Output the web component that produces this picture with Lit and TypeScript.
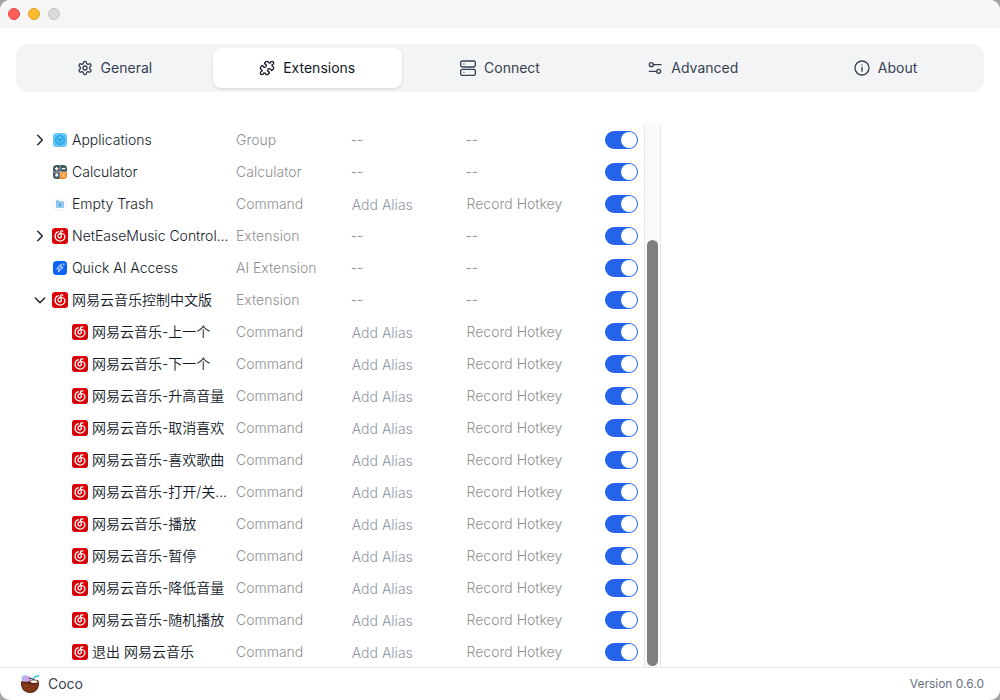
import { LitElement, html, svg, css } from "lit";
import { customElement, state } from "lit/decorators.js";

type IconName = "apps" | "calc" | "trash" | "netease" | "ai";

interface Entry {
  name: string;
  icon: IconName;
  type: string;
  expand?: "open" | "closed";
  editable?: boolean;
  child?: boolean;
}

const command = (name: string): Entry => ({
  name,
  icon: "netease",
  type: "Command",
  editable: true,
  child: true,
});

const ENTRIES: Entry[] = [
  { name: "Applications", icon: "apps", type: "Group", expand: "closed" },
  { name: "Calculator", icon: "calc", type: "Calculator" },
  { name: "Empty Trash", icon: "trash", type: "Command", editable: true },
  { name: "NetEaseMusic Control...", icon: "netease", type: "Extension", expand: "closed" },
  { name: "Quick AI Access", icon: "ai", type: "AI Extension" },
  { name: "网易云音乐控制中文版", icon: "netease", type: "Extension", expand: "open" },
  command("网易云音乐-上一个"),
  command("网易云音乐-下一个"),
  command("网易云音乐-升高音量"),
  command("网易云音乐-取消喜欢"),
  command("网易云音乐-喜欢歌曲"),
  command("网易云音乐-打开/关..."),
  command("网易云音乐-播放"),
  command("网易云音乐-暂停"),
  command("网易云音乐-降低音量"),
  command("网易云音乐-随机播放"),
  command("退出 网易云音乐"),
];

const TABS = [
  {
    label: "General",
    icon: svg`<path d="M12.22 2h-.44a2 2 0 0 0-2 2v.18a2 2 0 0 1-1 1.73l-.43.25a2 2 0 0 1-2 0l-.15-.08a2 2 0 0 0-2.73.73l-.22.38a2 2 0 0 0 .73 2.73l.15.1a2 2 0 0 1 1 1.72v.51a2 2 0 0 1-1 1.74l-.15.09a2 2 0 0 0-.73 2.73l.22.38a2 2 0 0 0 2.73.73l.15-.08a2 2 0 0 1 2 0l.43.25a2 2 0 0 1 1 1.73V20a2 2 0 0 0 2 2h.44a2 2 0 0 0 2-2v-.18a2 2 0 0 1 1-1.73l.43-.25a2 2 0 0 1 2 0l.15.08a2 2 0 0 0 2.73-.73l.22-.39a2 2 0 0 0-.73-2.73l-.15-.08a2 2 0 0 1-1-1.74v-.5a2 2 0 0 1 1-1.74l.15-.09a2 2 0 0 0 .73-2.73l-.22-.38a2 2 0 0 0-2.73-.73l-.15.08a2 2 0 0 1-2 0l-.43-.25a2 2 0 0 1-1-1.73V4a2 2 0 0 0-2-2z"/><circle cx="12" cy="12" r="3"/>`,
  },
  {
    label: "Extensions",
    icon: svg`<path d="M15.39 4.39a1 1 0 0 0 1.68-.474 2.5 2.5 0 1 1 3.014 3.015 1 1 0 0 0-.474 1.68l1.683 1.682a2.414 2.414 0 0 1 0 3.414L19.61 15.39a1 1 0 0 1-1.68-.474 2.5 2.5 0 1 0-3.014 3.015 1 1 0 0 1 .474 1.68l-1.683 1.682a2.414 2.414 0 0 1-3.414 0L8.61 19.61a1 1 0 0 0-1.68.474 2.5 2.5 0 1 1-3.014-3.015 1 1 0 0 0 .474-1.68l-1.683-1.682a2.414 2.414 0 0 1 0-3.414L4.39 8.61a1 1 0 0 1 1.68.474 2.5 2.5 0 1 0 3.014-3.015 1 1 0 0 1-.474-1.68l1.683-1.682a2.414 2.414 0 0 1 3.414 0z"/>`,
  },
  {
    label: "Connect",
    icon: svg`<rect x="1" y="1.500" width="22" height="9" rx="2.5"/><rect x="1" y="14" width="22" height="9" rx="2.5"/><path d="M6 6h.01M6 18.500h.01"/>`,
  },
  {
    label: "Advanced",
    icon: svg`<path d="M21 7H9.500M14.500 17H3.500"/><circle cx="17.500" cy="17" r="3"/><circle cx="6.500" cy="7" r="3"/>`,
  },
  {
    label: "About",
    icon: svg`<circle cx="12" cy="12" r="10.5"/><path d="M12 17v-6M12 7.5h.01"/>`,
  },
];

const ICONS = {
  apps: svg`<rect x="1" y="1" width="14" height="14" rx="3.5" fill="#63c6f8"/>
    <path d="M8 3.2 12.2 5.6v4.8L8 12.8 3.8 10.4V5.6z" fill="#54bdf4" stroke="#1e9ade" stroke-width="1" stroke-linejoin="round"/>
    <path d="M5 6.300 8 8l3-1.700M8 8v3.500" fill="none" stroke="#1e9ade" stroke-width="1"/>`,
  calc: svg`<path d="M4.500 1H7.800V7.800H1V4.500A3.500 3.500 0 0 1 4.500 1z" fill="#455a64"/>
    <path d="M8.200 1H11.500A3.500 3.500 0 0 1 15 4.500V7.800H8.200z" fill="#455a64"/>
    <path d="M1 8.200H7.800V15H4.500A3.500 3.500 0 0 1 1 11.500z" fill="#455a64"/>
    <path d="M8.200 8.200H15V11.500A3.500 3.500 0 0 1 11.500 15H8.200z" fill="#fb8c1a"/>
    <path d="M4.700 3v3.400M3 4.700h3.400M9.800 4.700h3.400" stroke="#fff" stroke-width="1.200"/>
    <rect x="3.400" y="9.600" width="2.800" height="3" rx=".5" fill="#fff"/>
    <path d="M9.800 10.300h3.400M9.800 12.200h3.400" stroke="#ffe9cf"/>`,
  trash: svg`<rect x="1.500" y="1.800" width="13" height="13.200" rx="3" fill="#e9ebed"/>
    <rect x="1.500" y="1" width="13" height="13.400" rx="3" fill="#fbfbfc"/>
    <path d="M4 4.500h3l.8 1H12v6H4z" fill="#75b4df"/>
    <rect x="4" y="6" width="8" height="5.800" rx=".5" fill="#8ec8ec"/>
    <path d="M7 7.500h2l-.2 2.700H7.200z" fill="#5799c8"/>`,
  netease: svg`<rect width="16" height="16" rx="3" fill="#d80207"/>
    <path d="M6.300 3.600C3.300 4.800 2.200 8 3.700 10.600c1.600 2.800 5.800 3.200 8 1C14 9.200 12.900 5.800 9.700 5.500 7.300 5.300 5.800 6.800 6 8.500c.3 2 3.400 1.900 3.400-.2C9.400 7.300 8.500 5.200 8.500 4c0-1.400 1.400-1.600 2.300-.8" fill="none" stroke="#fff" stroke-width="1.250" stroke-linecap="round"/>`,
  ai: svg`<rect x="1" y="1" width="14" height="14" rx="3.500" fill="#0b63f6"/>
    <path d="M9.300 4 4.600 8.700l2.500.4L6.300 12l4.900-4.700-2.600-.4z" fill="#3f8cff" stroke="#d7e8ff" stroke-width=".9" stroke-linejoin="round"/>
    <path d="M11.700 3.300v2M10.700 4.300h2" stroke="#d7e8ff" stroke-width=".7"/>`,
};

@customElement("app-root")
export class AppRoot extends LitElement {
  @state() private tab = "Extensions";

  static styles = css`
    :host {
      display: block;
      height: 100vh;
      background: #a3a3a3;
      font-family: Inter, "Noto Sans CJK SC", sans-serif;
      font-size: 14px;
      font-weight: 300;
      line-height: 20px;
      color: #111827;
    }
    * {
      box-sizing: border-box;
    }
    button,
    input {
      font: inherit;
      border: 0;
      margin: 0;
      padding: 0;
      background: none;
    }
    svg {
      display: block;
      flex: none;
    }
    .window {
      display: flex;
      flex-direction: column;
      height: 100%;
      overflow: hidden;
      border-radius: 10px;
      background: #fff;
    }
    .titlebar {
      display: flex;
      flex: none;
      align-items: center;
      gap: 8px;
      height: 28px;
      padding: 0 8px;
      background: #f6f6f6;
    }
    .light {
      width: 12px;
      height: 12px;
      border-radius: 50%;
      border: 1px solid #c3c3c3;
      background: #dadada;
    }
    .close {
      background: #fe5f58;
      border-color: #e24640;
    }
    .minimise {
      background: #febc2e;
      border-color: #e0a02a;
    }
    .tabs {
      display: flex;
      flex: none;
      gap: 4px;
      margin: 16px 16px 32px;
      padding: 4px;
      border-radius: 12px;
      background: #f3f4f6;
    }
    .tab {
      display: flex;
      flex: 1 1 0;
      align-items: center;
      justify-content: center;
      gap: 8px;
      height: 40px;
      border-radius: 8px;
      font-weight: 400;
      color: #374151;
    }
    .selected {
      background: #fff;
      color: #111827;
      box-shadow: 0 1px 3px rgba(0, 0, 0, 0.12);
    }
    .line {
      fill: none;
      stroke: currentColor;
      stroke-width: 2;
      stroke-linecap: round;
      stroke-linejoin: round;
    }
    .content {
      display: grid;
      grid-template-columns: 2fr 1fr;
      flex: 1;
      min-height: 0;
      padding: 0 16px;
    }
    .pane {
      display: flex;
      min-height: 0;
      overflow: hidden;
    }
    .list {
      flex: 1;
      min-width: 0;
      overflow: hidden;
    }
    .track {
      display: flex;
      flex-direction: column;
      justify-content: flex-end;
      flex: none;
      width: 17px;
      padding: 1px 2px;
      border: solid #e8e8e8;
      border-width: 0 1px;
      background: #fafafa;
    }
    .thumb {
      width: 11px;
      border-radius: 6px;
      background: #7f7f7f;
    }
    table {
      width: 100%;
      table-layout: fixed;
      border-collapse: collapse;
    }
    td {
      height: 32px;
      padding: 0;
      color: #8f8f8f;
      white-space: nowrap;
    }
    .col-name {
      width: 220px;
    }
    .col-switch {
      width: 64px;
    }
    .name {
      display: flex;
      align-items: center;
      gap: 4px;
      padding: 0 0 0 16px;
      font-weight: 350;
      color: #111827;
    }
    .child {
      padding-left: 56px;
    }
    .chevron {
      width: 16px;
      height: 16px;
      color: #111827;
    }
    .alias {
      display: block;
      width: 100%;
      height: 20px;
      padding: 2px 0 0 1px;
      color: #111827;
    }
    .alias::placeholder {
      color: #8f96a3;
      opacity: 1;
    }
    .hotkey {
      padding-left: 1px;
      color: #8f8f8f;
    }
    .switch-cell {
      padding-right: 6px;
    }
    .switch {
      appearance: none;
      display: flex;
      align-items: center;
      width: 33px;
      height: 18px;
      margin-left: auto;
      padding: 1px;
      border-radius: 9px;
      background: #d1d5db;
    }
    .switch::before {
      content: "";
      width: 16px;
      height: 16px;
      border-radius: 50%;
      background: #fff;
    }
    .switch:checked {
      justify-content: flex-end;
      background: #2563eb;
    }
    .footer {
      display: flex;
      flex: none;
      align-items: center;
      justify-content: space-between;
      height: 33px;
      padding: 0 16px 0 20px;
      border-top: 1px solid #e5e7eb;
    }
    .brand {
      display: flex;
      align-items: center;
      gap: 8px;
      font-weight: 400;
      color: #374151;
    }
    .version {
      font-size: 12px;
      font-weight: 400;
      color: #6b7280;
    }
  `;

  private row(e: Entry) {
    return html`<tr>
      <td>
        <div class="name ${e.child ? "child" : ""}">
          ${e.expand
            ? html`<button class="chevron" aria-label="Toggle ${e.name}">
                <svg class="line" width="16" height="16" viewBox="0 0 24 24">
                  <path d=${e.expand === "open" ? "M5 9l7 7 7-7" : "M8.500 5l7 7-7 7"} />
                </svg>
              </button>`
            : e.child
              ? ""
              : html`<span class="chevron"></span>`}
          <svg width="16" height="16" viewBox="0 0 16 16">${ICONS[e.icon]}</svg>
          <span>${e.name}</span>
        </div>
      </td>
      <td>${e.type}</td>
      <td>
        ${e.editable
          ? html`<input class="alias" placeholder="Add Alias" aria-label="Alias for ${e.name}" />`
          : "--"}
      </td>
      <td>${e.editable ? html`<button class="hotkey">Record Hotkey</button>` : "--"}</td>
      <td class="switch-cell">
        <input class="switch" type="checkbox" role="switch" checked aria-label="Enable ${e.name}" />
      </td>
    </tr>`;
  }

  render() {
    return html`<div class="window">
      <div class="titlebar">
        <button class="light close" aria-label="Close"></button>
        <button class="light minimise" aria-label="Minimise"></button>
        <button class="light" aria-label="Zoom" disabled></button>
      </div>
      <nav class="tabs" role="tablist">
        ${TABS.map(
          (t) => html`<button
            class="tab ${t.label === this.tab ? "selected" : ""}"
            role="tab"
            aria-selected=${t.label === this.tab ? "true" : "false"}
            @click=${() => (this.tab = t.label)}
          >
            <svg class="line" width="16" height="16" viewBox="0 0 24 24">${t.icon}</svg>
            <span>${t.label}</span>
          </button>`
        )}
      </nav>
      <main class="content">
        <section class="pane">
          <div class="list">
            <table>
              <colgroup>
                <col class="col-name" />
                <col />
                <col />
                <col />
                <col class="col-switch" />
              </colgroup>
              <tbody>
                ${ENTRIES.map((e) => this.row(e))}
              </tbody>
            </table>
          </div>
          <div class="track"><div class="thumb" style="height:${(ENTRIES.length / 21.6) * 100}%"></div></div>
        </section>
      </main>
      <footer class="footer">
        <div class="brand">
          <svg width="20" height="20" viewBox="0 0 20 20">
            <circle cx="5" cy="4.500" r="3.300" fill="#8fc3f2" />
            <circle cx="7" cy="5.500" r="3.800" fill="#cfa4ea" />
            <path d="M1.200 7c1.500.4 3 .8 5 .8 3 .4 4-1.800 6.500-2 3-.2 5.500 0 6.100 1.400C20 14 16 19 10 19S0 14 1.200 7z" fill="#5b2614" />
            <path d="M2 8.800c2 .8 3 .2 4.500.6 2 .8 3 .6 4.500.8 2.500.7 5 .2 7-.6-.6 5.500-3.700 8.400-8 8.400s-8-3-8-9.200z" fill="#81371a" />
            <path d="M10 7.400c1.500-1.500 6-1.600 8 .3-1.500 1.800-6 1.700-8-.3z" fill="#f7ece5" />
            <path d="M13 6 14.500 3l4.500-1.500" fill="none" stroke="#32c3d5" stroke-width="1.400" />
            <path d="M9 4 14.500 5.800" stroke="#353149" stroke-width="1.200" />
            <path d="M6 12.500h.1M9 14.500h.1M13 12.500h.1" stroke="#b35b30" stroke-linecap="round" />
          </svg>
          <span>Coco</span>
        </div>
        <span class="version">Version 0.6.0</span>
      </footer>
    </div>`;
  }
}
